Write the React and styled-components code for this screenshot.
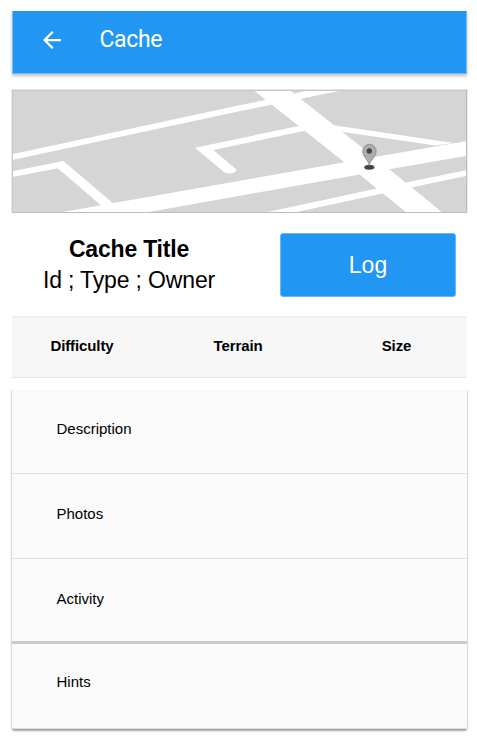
import React from "react";
import styled, { createGlobalStyle } from "styled-components";

const GlobalStyle = createGlobalStyle`
  *, *::before, *::after { box-sizing: border-box; }
  body { margin: 0; background: #fff; color: #000; font-family: "Liberation Sans", Arial, sans-serif; }
`;

const Page = styled.main`
  display: flex;
  flex-direction: column;
  width: 477px;
  height: 744px;
  padding: 11px 10px 0 12px;
  overflow: hidden;
`;

const AppBar = styled.header`
  display: flex;
  align-items: center;
  flex: none;
  height: 63px;
  padding: 0 0 5px 30px;
  background: #2196f3;
  border: 1px solid #7fbdf0;
  border-top-color: #2196f3;
  box-shadow: 0 2px 3px rgba(0, 0, 0, 0.25);
  color: #fff;
`;

const BackButton = styled.button`
  display: flex;
  padding: 0;
  border: 0;
  background: none;
  color: inherit;
`;

const BarTitle = styled.h1`
  margin: 0 0 0 38.5px;
  font: 400 23px/28px Roboto, sans-serif;
  letter-spacing: -0.35px;
`;

const MapImage = styled.svg`
  display: block;
  flex: none;
  width: 457px;
  height: 124px;
  margin: 15px 0 0 -1px;
`;

const Summary = styled.section`
  display: flex;
  justify-content: space-between;
  flex: none;
  height: 103px;
  padding: 20px 11px 0 0;
`;

const Heading = styled.div`
  width: 234px;
  padding-top: 1px;
  text-align: center;
  font-size: 23px;
  line-height: 31px;
`;

const CacheTitle = styled.h2`
  margin: 0;
  font-size: inherit;
  line-height: inherit;
  letter-spacing: -0.2px;
`;

const CacheMeta = styled.p`
  margin: 0;
  letter-spacing: -0.15px;
`;

const LogButton = styled.button`
  width: 176px;
  height: 64px;
  padding: 0;
  border: 1px solid #68b6f6;
  border-radius: 3px;
  background: #2196f3;
  color: #fff;
  font: 23px "Liberation Sans", Arial, sans-serif;
`;

const Stats = styled.section`
  display: flex;
  flex: none;
  height: 62px;
  background: #f7f7f7;
  border-top: 2px solid #f0f0f0;
  border-bottom: 1px solid #e4e4e4;
`;

const Stat = styled.h3`
  flex: none;
  width: ${({ $width }) => $width}px;
  margin: 0;
  text-align: center;
  font-size: 15px;
  line-height: 56px;
  letter-spacing: -0.1px;
`;

const Panels = styled.section`
  flex: none;
  margin-top: 11px;
  border-radius: 0 0 2px 2px;
  box-shadow: 0 2px 2px rgba(0, 0, 0, 0.34), 0 0 2px rgba(0, 0, 0, 0.22);
  clip-path: inset(0 -6px -8px -6px);
`;

const Panel = styled.div`
  height: 85px;
  padding-left: 44.5px;
  background: #fafafa;
  border-bottom: ${({ $divider }) => $divider};
  font-size: 15px;
  line-height: ${({ $line }) => $line}px;
  &:last-child { border-radius: 0 0 2px 2px; }
`;

const roads = [
  "M11 154.5 L237 105.8 L275 98 L310 90 H344 L237 111.8 L11 160.3Z",
  "M253.4 90 H289.5 L333.7 125 L389.3 169.3 L443 213 H407 L344.3 162.3Z",
  "M57 213 L240 180.7 L344.3 162.3 L467 141 V155.7 L389.3 169.3 L240 195.7 L143 213Z",
  "M11 171.5 L63.3 161 L114 204 L103 207 L57.7 168.3 L11 177.3Z",
  "M195 147.7 L298.7 126 L305 130.7 L213.3 150 L235.3 168.5 Q237.7 171 234 172.7 Q227.5 174.5 223.3 171.5Z",
  "M332 125 L453.7 143 L435 145.5 L340 131.6Z",
  "M263 213 L377 188.5 L467 170 V175.7 L383.7 193.3 L292 213Z",
];

function LocationMap() {
  return (
    <MapImage viewBox="11 89 457 124" role="img" aria-label="Cache location">
      <rect x="11" y="89" width="457" height="124" fill="#d5d5d5" />
      {roads.map((d) => <path key={d} d={d} fill="#fff" />)}
      <path d="M11 89.5H468" stroke="#e6e6e6" />
      <path d="M12 90.5H467 M12.5 90V213" stroke="#c8c8c8" fill="none" />
      <path d="M11.5 89V213 M467.5 89V213" stroke="#eaeaea" />
      <path d="M466.5 90V213 M12 212.5H467" stroke="#bdbdbd" />
      <ellipse cx="369.3" cy="167.2" rx="5" ry="2.5" fill="#444" />
      <path d="M369.3 165.7 C369 160.5 362.7 157.5 362.7 151 A6.7 6.7 0 1 1 376.1 151 C376.1 157.5 369.7 160.5 369.3 165.7Z" fill="#adadad" stroke="#898989" strokeWidth=".8" />
      <circle cx="369.3" cy="151" r="2.7" fill="#444" />
    </MapImage>
  );
}

const panels = [
  { name: "Description", line: 80, divider: "1px solid #e2e2e2" },
  { name: "Photos", line: 80, divider: "1px solid #e2e2e2" },
  { name: "Activity", line: 80, divider: "3px solid #cbcbcb" },
  { name: "Hints", line: 76, divider: "1px solid #ddd" },
];

export default function App() {
  return (
    <>
      <GlobalStyle />
      <Page>
        <AppBar>
          <BackButton aria-label="Back">
            <svg width="18" height="18" viewBox="4 4 16 16" fill="currentColor">
              <path d="M20 11H7.83l5.59-5.59L12 4l-8 8 8 8 1.41-1.41L7.83 13H20z" />
            </svg>
          </BackButton>
          <BarTitle>Cache</BarTitle>
        </AppBar>
        <LocationMap />
        <Summary>
          <Heading>
            <CacheTitle>Cache Title</CacheTitle>
            <CacheMeta>Id ; Type ; Owner</CacheMeta>
          </Heading>
          <LogButton>Log</LogButton>
        </Summary>
        <Stats>
          <Stat $width={140}>Difficulty</Stat>
          <Stat $width={172}>Terrain</Stat>
          <Stat $width={145}>Size</Stat>
        </Stats>
        <Panels>
          {panels.map(({ name, line, divider }) => (
            <Panel key={name} $line={line} $divider={divider}>{name}</Panel>
          ))}
        </Panels>
      </Page>
    </>
  );
}
